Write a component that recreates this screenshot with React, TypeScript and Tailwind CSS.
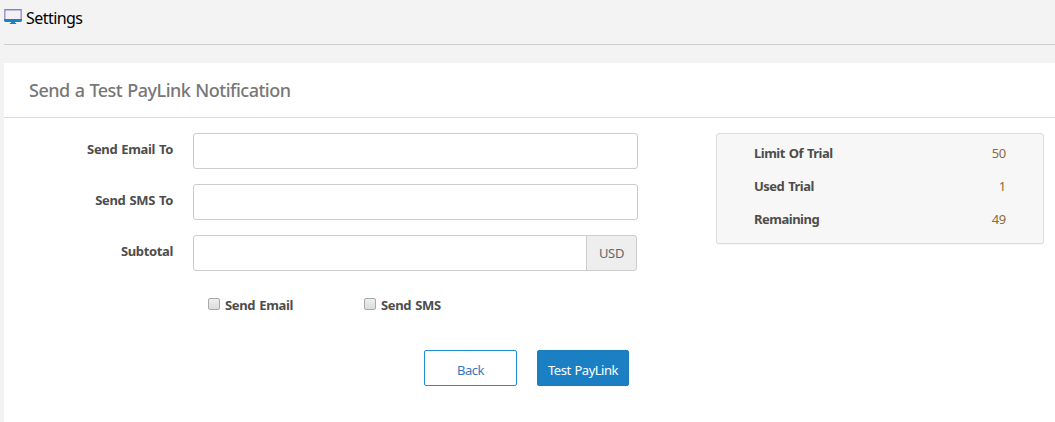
import type { ReactNode } from "react";

function MonitorIcon() {
  return (
    <svg width="18" height="15" viewBox="0 0 18 15" className="block shrink-0">
      <rect x="0" y="0" width="18" height="13" rx="1.4" fill="#1c82c6" />
      <path d="M0 10V1.4Q0 0 1.4 0h15.2Q18 0 18 1.4V10z" fill="#a99acb" />
      <path d="M1 0h16v1.5H1z" fill="#5b93d0" />
      <rect x="1.6" y="1.5" width="14.8" height="8.5" fill="#f4f1f5" />
      <path d="M7 13h4v1h1.2v1H5.8v-1H7z" fill="#1c82c6" />
    </svg>
  );
}

function Field({ label, children }: { label: string; children: ReactNode }) {
  return (
    <label className="flex h-9">
      <span className="w-[169px] pt-1.5 text-right leading-5 font-bold tracking-[-0.36px] [word-spacing:1px]">
        {label}
      </span>
      <span className="ml-5 flex w-[445px]">{children}</span>
    </label>
  );
}

function Check({ label }: { label: string }) {
  return (
    <label className="flex w-[156px] items-start leading-5 font-bold tracking-[-0.35px] [word-spacing:1px]">
      <input
        type="checkbox"
        className="mt-[3px] mr-[5px] h-3 w-3 appearance-none rounded-[2px] border border-[#a9a9a9] bg-linear-to-b from-[#eeeeee] to-[#dcdcdc]"
      />
      {label}
    </label>
  );
}

const stats = [
  ["Limit Of Trial", "50"],
  ["Used Trial", "1"],
  ["Remaining", "49"],
];

export default function App() {
  return (
    <div className="h-[422px] overflow-hidden bg-[#f3f3f3] pl-1 font-['Noto_Sans',sans-serif] text-[13px] text-[#4d4d4d]">
      <header className="flex h-[45px] items-start gap-1 border-b border-[#cecece] pt-[9px]">
        <MonitorIcon />
        <h1 className="-mt-px text-[16px] leading-5 tracking-[-0.55px] text-black">Settings</h1>
      </header>
      <main className="mt-[18px] h-[359px] bg-white">
        <h2 className="h-[55px] border-b border-[#dcdcdc] pt-[15px] pl-[25px] text-[18px] leading-6 font-medium tracking-[-0.5px] text-[#777777] [word-spacing:0.8px]">
          Send a Test PayLink Notification
        </h2>
        <div className="flex items-start pt-[15px]">
          <form className="w-[634px]">
            <div className="flex flex-col gap-[15px]">
              <Field label="Send Email To">
                <input className="w-full rounded-[3px] border border-[#cccccc] bg-white px-3" />
              </Field>
              <Field label="Send SMS To">
                <input className="w-full rounded-[3px] border border-[#cccccc] bg-white px-3" />
              </Field>
              <Field label="Subtotal">
                <input className="w-[394px] rounded-l-[3px] border border-[#cccccc] bg-white px-3" />
                <span className="-ml-px flex w-[51px] items-center justify-center rounded-r-[3px] border border-[#cccccc] bg-[#eeeeee] pt-0.5 tracking-[-0.3px] text-[#666666]">
                  USD
                </span>
              </Field>
            </div>
            <div className="mt-6 flex pl-[204px]">
              <Check label="Send Email" />
              <Check label="Send SMS" />
            </div>
            <div className="mt-[35px] flex gap-5 pl-[420px]">
              <button
                type="button"
                className="h-9 w-[93px] rounded-[2px] border border-[#208dcf] bg-white pt-1.5 text-[13px] tracking-[-0.5px] text-[#3478bd]"
              >
                Back
              </button>
              <button
                type="button"
                className="h-9 w-[92px] rounded-[2px] border border-[#1b7bbd] bg-[#1b7fc4] pt-1.5 text-[13px] tracking-[-0.5px] whitespace-nowrap text-white [word-spacing:1px]"
              >
                Test PayLink
              </button>
            </div>
          </form>
          <dl className="ml-[78px] h-[111px] w-[328px] rounded-[3px] border border-[#dddddd] bg-[#f7f7f7] pt-[9px] pr-[37px] pl-[37px] shadow-[0_1px_1px_rgba(0,0,0,0.05)]">
            {stats.map(([name, value]) => (
              <div key={name} className="flex h-[33px] justify-between leading-5">
                <dt className="font-bold tracking-[-0.5px] [word-spacing:1px]">{name}</dt>
                <dd className="tracking-[-0.3px] text-[#8a6d3b]">{value}</dd>
              </div>
            ))}
          </dl>
        </div>
      </main>
    </div>
  );
}
